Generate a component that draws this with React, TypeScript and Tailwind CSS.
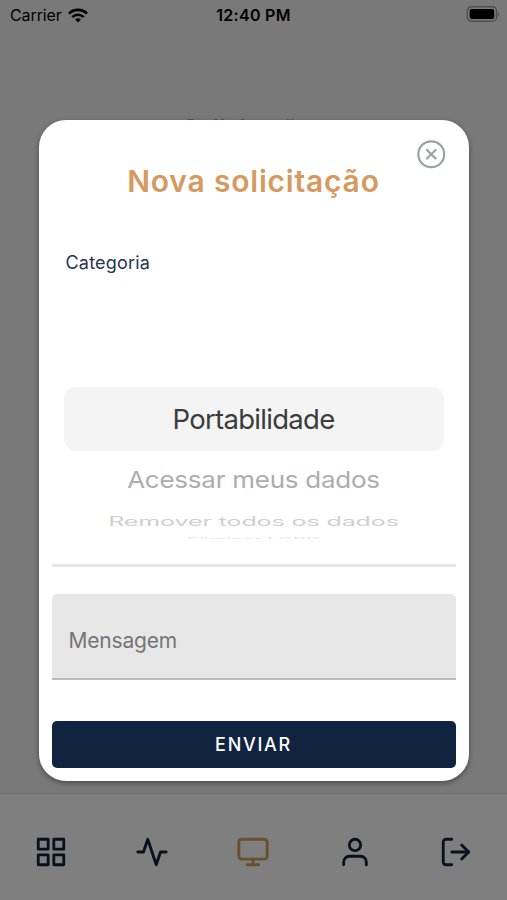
import { useState } from "react";
import { FiActivity, FiGrid, FiLogOut, FiMonitor, FiUser } from "react-icons/fi";
import { IoCloseCircleOutline } from "react-icons/io5";

function StatusBar(){
    return(
        <div className="grid h-[30px] grid-cols-3 items-center px-[10px] text-[16px] text-black">
            <div className="flex items-center gap-[6px]">
                <span className="tracking-[-0.1px]">Carrier</span>
                <svg width="20" height="15" viewBox="0 0 20 15" fill="none" stroke="black" strokeWidth="2.7">
                    <path d="M1 5.6a12.8 12.8 0 0 1 18 0" />
                    <path d="M4.3 9.1a8.1 8.1 0 0 1 11.4 0" />
                    <path d="M10 14.6l-2.9-3a4.1 4.1 0 0 1 5.8 0z" fill="black" stroke="none" />
                </svg>
            </div>
            <div className="text-center font-semibold tracking-[0.3px] whitespace-nowrap">12:40 PM</div>
            <div className="-mr-[10px] flex items-center justify-end pr-[7px] pb-[2px]">
                <svg width="34" height="16" viewBox="0 0 34 16">
                    <rect x="1.2" y="0.7" width="29.4" height="14.6" rx="4.2" fill="none" stroke="#a0a0a0" strokeWidth="1.4" />
                    <rect x="3.6" y="3" width="24.6" height="10" rx="2" fill="black" />
                    <path d="M32 5.7c1.6.8 1.6 3.8 0 4.6z" fill="#a0a0a0" />
                </svg>
            </div>
        </div>
    );
}

function TabBar(){
    return(
        <div className="flex h-[107px] items-start justify-around border-t border-[#e2e2e2] bg-white pt-[41px] text-[#11243f]">
            <FiGrid size={34} />
            <FiActivity size={34} />
            <FiMonitor size={34} className="text-[#d69a60]" />
            <FiUser size={34} />
            <FiLogOut size={34} />
        </div>
    );
}

function Picker(){
    return(
        <div className="mx-[12px] mt-[112px] flex h-[152px] flex-col items-center overflow-hidden whitespace-nowrap">
            <div className="flex h-[64px] w-full shrink-0 items-center justify-center rounded-[12px] bg-[#f4f4f4] pt-[2px] text-[27.5px] tracking-[-0.7px] text-[#3c3c3c]">Portabilidade</div>
            <div className="flex h-[57px] shrink-0 items-center text-[26px] tracking-[-0.25px] text-[#adadad]">
                <span className="scale-y-90">Acessar meus dados</span>
            </div>
            <div className="flex h-[27px] shrink-0 items-center text-[25px] tracking-[-0.1px] text-[#cfcfcf]">
                <span className="scale-y-[0.5]">Remover todos os dados</span>
            </div>
            <div className="flex h-[10px] shrink-0 items-center text-[20px] text-[#e4e4e4]">
                <span className="scale-y-[0.3]">Eliminar LGPD</span>
            </div>
        </div>
    );
}

export default function App(){

    const [message,setMessage]=useState('');

    return(
        <div className="relative flex h-[900px] w-[507px] flex-col overflow-hidden bg-[#f2f2f2] font-['Inter',sans-serif]">
            <StatusBar />
            <div className="flex-1 pt-[81px] text-center text-[24px] leading-[36px] font-semibold text-[#d69a60]">Solicitações</div>
            <TabBar />

            <div className="absolute inset-0 bg-black/50 pt-[120px]">
                <div className="mx-auto flex h-[661px] w-[430px] flex-col rounded-[27px] bg-white px-[13px] shadow-[0_2px_5px_rgba(0,0,0,0.4)]">
                    <div className="flex h-[51px] items-end justify-end pr-[7px]">
                        <button aria-label="Fechar" className="text-[#9b9ead]">
                            <IoCloseCircleOutline size={34.5} />
                        </button>
                    </div>
                    <h1 className="-mt-[11px] h-[42px] text-center text-[30px] leading-[42px] font-semibold tracking-[0.8px] whitespace-nowrap text-[#d69a60]">Nova solicitação</h1>
                    <label className="mt-[49px] pl-[14px] text-[18px] leading-[24px] tracking-[0.2px] text-[#2a3352]">Categoria</label>
                    <Picker />
                    <div className="mt-[25px] h-[3px] shrink-0 bg-[#e6e6e6]" />
                    <input
                        type="text"
                        placeholder="Mensagem"
                        value={message}
                        onChange={(e)=>{setMessage(e.target.value)}}
                        className="mt-[27px] h-[86px] w-full shrink-0 rounded-t-[5px] border-b-2 border-[#b9b9b9] bg-[#e7e7e7] px-[17px] pt-[8px] text-[21px] tracking-[-0.2px] text-[#333] outline-none placeholder:text-[#757575]"
                    />
                    <button className="mt-[41px] h-[47px] w-full shrink-0 rounded-[5px] bg-[#11243f] text-[18px] font-medium tracking-[1.7px] text-white">ENVIAR</button>
                </div>
            </div>
        </div>
    );
}
